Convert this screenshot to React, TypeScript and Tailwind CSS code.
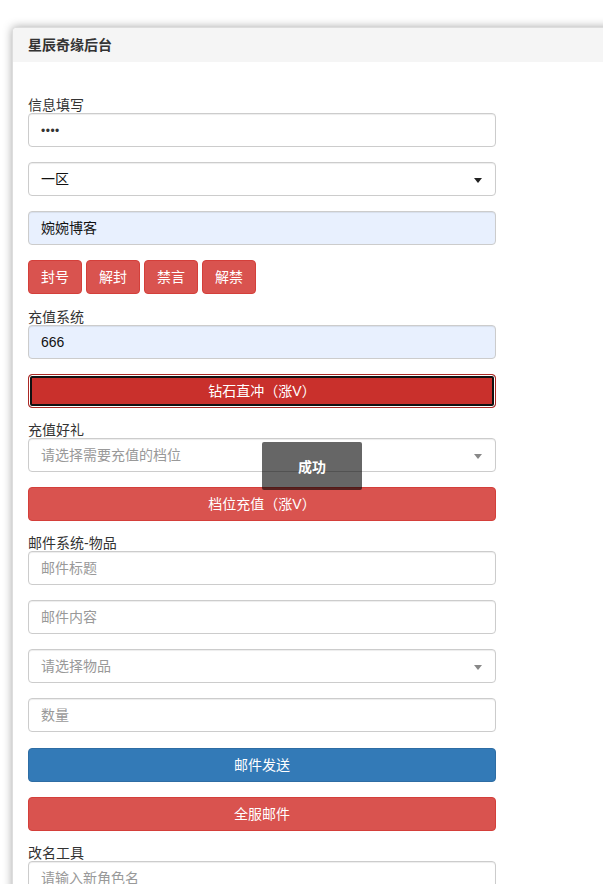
import React from "react";

const font = { fontFamily: '"Liberation Sans", "Noto Sans CJK SC", sans-serif' };

function Label({ children }: { children: React.ReactNode }) {
  return <div className="h-[15px] text-[14px] leading-[15px] text-[#333]">{children}</div>;
}

function Field({
  children,
  placeholder,
  auto,
  caret,
  className = "",
}: {
  children?: React.ReactNode;
  placeholder?: string;
  auto?: boolean;
  caret?: "dark" | "gray";
  className?: string;
}) {
  return (
    <div
      className={`relative flex h-[34px] w-[468px] items-center rounded-[4px] border border-[#ccc] px-[12px] text-[14px] shadow-[inset_0_1px_1px_rgba(0,0,0,0.075)] ${
        auto ? "bg-[#e8f0fe]" : "bg-white"
      } ${className}`}
    >
      {placeholder ? <span className="text-[#999]">{placeholder}</span> : <span className="text-[#111]">{children}</span>}
      {caret && (
        <span
          className={`absolute right-[13px] top-[15px] h-0 w-0 border-x-[4px] border-t-[5px] border-x-transparent ${
            caret === "dark" ? "border-t-[#222]" : "border-t-[#888]"
          }`}
        />
      )}
    </div>
  );
}

function BlockBtn({ children, color, className = "" }: { children: React.ReactNode; color: "red" | "blue" | "focus"; className?: string }) {
  const c =
    color === "red"
      ? "bg-[#d9534f] border-[#d43f3a]"
      : color === "blue"
      ? "bg-[#337ab7] border-[#2e6da4]"
      : "bg-[#c9302c] border-[#ac2925] shadow-[inset_0_0_0_1px_#ffffff,inset_0_0_0_3px_#111111]";
  return (
    <div className={`flex h-[34px] w-[468px] items-center justify-center rounded-[4px] border text-[14px] text-white ${c} ${className}`}>
      {children}
    </div>
  );
}

function SmallBtn({ children }: { children: React.ReactNode }) {
  return (
    <div className="flex h-[34px] items-center rounded-[4px] border border-[#d43f3a] bg-[#d9534f] px-[12px] text-[14px] text-white">
      {children}
    </div>
  );
}

export default function App() {
  return (
    <div className="h-[884px] w-full overflow-hidden bg-white" style={font}>
      <div className="pl-[12px] pt-[27px]">
        <div className="relative w-[640px] rounded-tl-[4px] border border-[#ddd] bg-white shadow-[0_0_10px_rgba(0,0,0,0.35)]">
          <div className="flex h-[34px] items-center rounded-tl-[4px] bg-[#f5f5f5] px-[15px] text-[14px] font-bold text-[#333]">
            星辰奇缘后台
          </div>
          <div className="px-[15px] pt-[36px] pb-[40px]">
            <Label>信息填写</Label>
            <Field className="mb-[15px]">
              <span className="text-[12px] tracking-[0.5px] text-[#333]">••••</span>
            </Field>
            <Field caret="dark" className="mb-[15px]">
              一区
            </Field>
            <Field auto className="mb-[15px]">
              婉婉博客
            </Field>
            <div className="mb-[16px] flex gap-[4px]">
              <SmallBtn>封号</SmallBtn>
              <SmallBtn>解封</SmallBtn>
              <SmallBtn>禁言</SmallBtn>
              <SmallBtn>解禁</SmallBtn>
            </div>
            <Label>充值系统</Label>
            <Field auto className="mb-[15px]">
              666
            </Field>
            <BlockBtn color="focus" className="mb-[15px]">
              钻石直冲（涨V）
            </BlockBtn>
            <Label>充值好礼</Label>
            <Field placeholder="请选择需要充值的档位" caret="gray" className="mb-[15px]" />
            <BlockBtn color="red" className="mb-[15px]">
              档位充值（涨V）
            </BlockBtn>
            <Label>邮件系统-物品</Label>
            <Field placeholder="邮件标题" className="mb-[15px]" />
            <Field placeholder="邮件内容" className="mb-[15px]" />
            <Field placeholder="请选择物品" caret="gray" className="mb-[15px]" />
            <Field placeholder="数量" className="mb-[16px]" />
            <BlockBtn color="blue" className="mb-[15px]">
              邮件发送
            </BlockBtn>
            <BlockBtn color="red" className="mb-[15px]">
              全服邮件
            </BlockBtn>
            <Label>改名工具</Label>
            <Field placeholder="请输入新角色名" className="mb-[15px]" />
          </div>
          <div className="absolute left-[249px] top-[414px] flex h-[48px] w-[100px] items-center justify-center rounded-[2px] bg-[rgba(0,0,0,0.6)] pt-[2px] text-[14px] font-bold text-white">
            成功
          </div>
        </div>
      </div>
    </div>
  );
}
